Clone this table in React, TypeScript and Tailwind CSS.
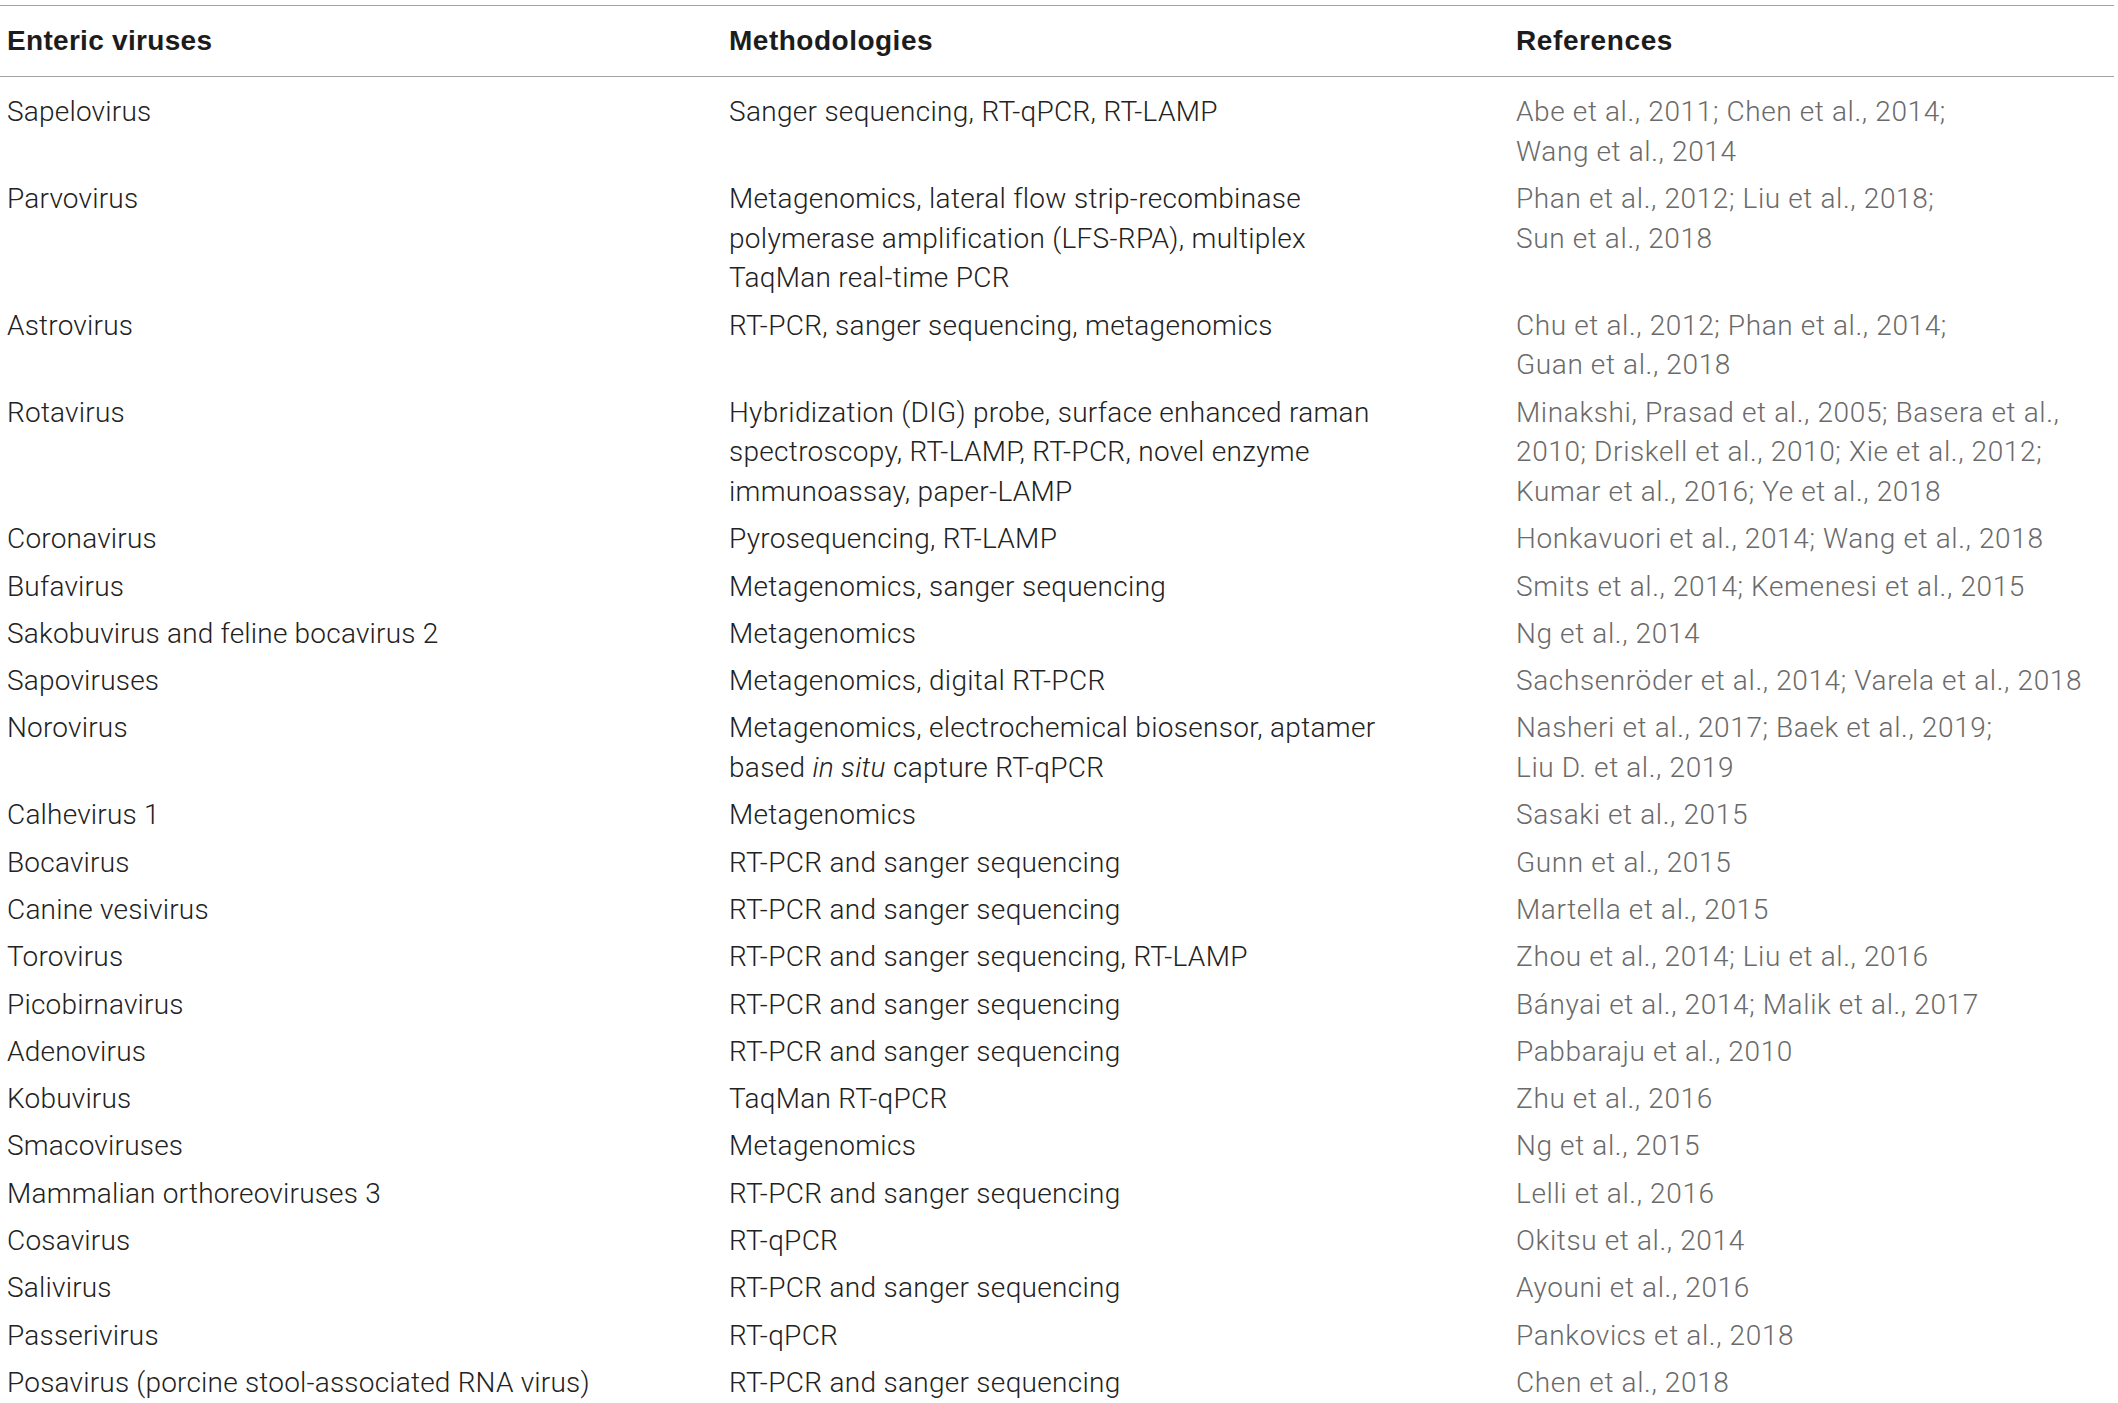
import React from "react";

type Row = { v: React.ReactNode; m: React.ReactNode; r: React.ReactNode };

const rows: Row[] = [
  { v: "Sapelovirus", m: "Sanger sequencing, RT-qPCR, RT-LAMP", r: <>Abe et al., 2011; Chen et al., 2014;<br />Wang et al., 2014</> },
  { v: "Parvovirus", m: <>Metagenomics, lateral flow strip-recombinase<br />polymerase amplification (LFS-RPA), multiplex<br />TaqMan real-time PCR</>, r: <>Phan et al., 2012; Liu et al., 2018;<br />Sun et al., 2018</> },
  { v: "Astrovirus", m: "RT-PCR, sanger sequencing, metagenomics", r: <>Chu et al., 2012; Phan et al., 2014;<br />Guan et al., 2018</> },
  { v: "Rotavirus", m: <>Hybridization (DIG) probe, surface enhanced raman<br />spectroscopy, RT-LAMP, RT-PCR, novel enzyme<br />immunoassay, paper-LAMP</>, r: <>Minakshi, Prasad et al., 2005; Basera et al.,<br />2010; Driskell et al., 2010; Xie et al., 2012;<br />Kumar et al., 2016; Ye et al., 2018</> },
  { v: "Coronavirus", m: "Pyrosequencing, RT-LAMP", r: "Honkavuori et al., 2014; Wang et al., 2018" },
  { v: "Bufavirus", m: "Metagenomics, sanger sequencing", r: "Smits et al., 2014; Kemenesi et al., 2015" },
  { v: "Sakobuvirus and feline bocavirus 2", m: "Metagenomics", r: "Ng et al., 2014" },
  { v: "Sapoviruses", m: "Metagenomics, digital RT-PCR", r: "Sachsenröder et al., 2014; Varela et al., 2018" },
  { v: "Norovirus", m: <>Metagenomics, electrochemical biosensor, aptamer<br />based <i>in situ</i> capture RT-qPCR</>, r: <>Nasheri et al., 2017; Baek et al., 2019;<br />Liu D. et al., 2019</> },
  { v: "Calhevirus 1", m: "Metagenomics", r: "Sasaki et al., 2015" },
  { v: "Bocavirus", m: "RT-PCR and sanger sequencing", r: "Gunn et al., 2015" },
  { v: "Canine vesivirus", m: "RT-PCR and sanger sequencing", r: "Martella et al., 2015" },
  { v: "Torovirus", m: "RT-PCR and sanger sequencing, RT-LAMP", r: "Zhou et al., 2014; Liu et al., 2016" },
  { v: "Picobirnavirus", m: "RT-PCR and sanger sequencing", r: "Bányai et al., 2014; Malik et al., 2017" },
  { v: "Adenovirus", m: "RT-PCR and sanger sequencing", r: "Pabbaraju et al., 2010" },
  { v: "Kobuvirus", m: "TaqMan RT-qPCR", r: "Zhu et al., 2016" },
  { v: "Smacoviruses", m: "Metagenomics", r: "Ng et al., 2015" },
  { v: "Mammalian orthoreoviruses 3", m: "RT-PCR and sanger sequencing", r: "Lelli et al., 2016" },
  { v: "Cosavirus", m: "RT-qPCR", r: "Okitsu et al., 2014" },
  { v: "Salivirus", m: "RT-PCR and sanger sequencing", r: "Ayouni et al., 2016" },
  { v: "Passerivirus", m: "RT-qPCR", r: "Pankovics et al., 2018" },
  { v: "Posavirus (porcine stool-associated RNA virus)", m: "RT-PCR and sanger sequencing", r: "Chen et al., 2018" },
];

export default function App() {
  return (
    <div className="w-[2118px] h-[1403px] overflow-hidden bg-white pt-[5px] font-['Roboto',sans-serif]">
      <div className="w-[2114px]">
        <div className="grid grid-cols-[722px_787px_605px] h-[72px] items-center border-t border-b border-[#a3a3a3] text-[28px] font-bold text-[#1c1c1c] font-['Liberation_Sans',Arial,sans-serif]">
          <div className="pl-[7px] tracking-[0.3px]">Enteric viruses</div>
          <div className="pl-[7px] tracking-[0.5px]">Methodologies</div>
          <div className="pl-[7px] tracking-[0.6px]">References</div>
        </div>
        <div className="pt-[11px]">
          {rows.map((row, i) => (
            <div
              key={i}
              className="grid grid-cols-[722px_787px_605px] py-[3.8px] text-[28px] leading-[39.7px] font-light whitespace-nowrap"
            >
              <div className="pl-[7px] text-[#222222] tracking-[0.2px]">{row.v}</div>
              <div className="pl-[7px] text-[#222222] tracking-[0.3px]">{row.m}</div>
              <div className="pl-[7px] text-[#6a6a6a] tracking-[0.62px]">{row.r}</div>
            </div>
          ))}
        </div>
      </div>
    </div>
  );
}
